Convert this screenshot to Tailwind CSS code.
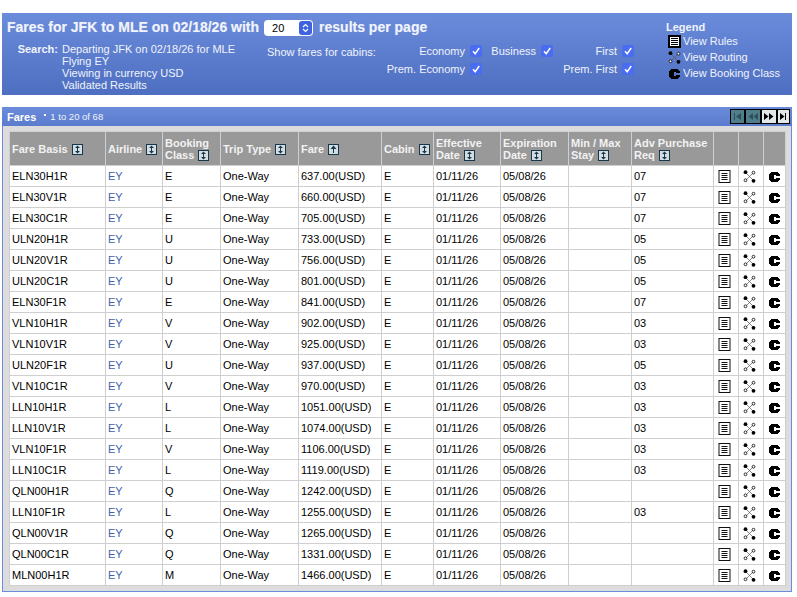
<!DOCTYPE html>
<html>
<head>
<meta charset="utf-8">
<script src="https://cdn.jsdelivr.net/npm/@tailwindcss/browser@4"></script>
</head>
<body class="bg-white font-['Liberation_Sans',Arial,sans-serif] text-[11px] leading-[12px] text-black overflow-hidden">
<svg class="hidden">
  <symbol id="legrules" viewBox="0 0 13 13"><path fill="#000" d="M0 0h13v13H0z"/><path fill="#fff" d="M2 2h9v9H2z"/><path fill="#000" d="M3 3h7v1H3zM3 5h7v1H3zM3 7h7v1H3zM3 9h7v1H3z"/></symbol>
  <symbol id="rules" viewBox="0 0 12 13"><path fill="#111" d="M0 0h12v13H0z"/><path fill="#fff" d="M1 1h10v11H1z"/><path fill="#111" d="M3 3h6v1H3zM3 5h6v1H3zM3 7h6v1H3zM3 9h6v1H3z"/></symbol>
  <symbol id="routing" viewBox="0 0 13 13"><path d="M2.500 2.500l8 8M2.500 10.500l8-8" fill="none" stroke="#555" stroke-width=".7"/><circle cx="2.500" cy="2.200" r="1.900" fill="#000"/><circle cx="10.500" cy="10.800" r="1.900" fill="#000"/><circle cx="2.500" cy="10.300" r="1.400" fill="#fff" stroke="#000" stroke-width=".8"/><circle cx="10.500" cy="2.700" r="1.400" fill="#fff" stroke="#000" stroke-width=".8"/></symbol>
  <symbol id="cls" viewBox="-1 -2 13 13"><path fill="#000" d="M2 0h7v1h1v1h1v2H7V3H5v4h2V6h4v2h-1v1H9v1H2V9H1V8H0V2h1V1h1z"/></symbol>
  <symbol id="sort" viewBox="0 0 11 11"><path fill="#17384a" d="M0 0h11v11H0z"/><path fill="#d3dde1" d="M1 1h9v9H1z"/><path fill="#17384a" d="M5.500 1.500L8 4H6v3h2L5.500 9.500 3 7h2V4H3z"/></symbol>
  <symbol id="sortup" viewBox="0 0 11 11"><path fill="#17384a" d="M0 0h11v11H0z"/><path fill="#d3dde1" d="M1 1h9v9H1z"/><path fill="#17384a" d="M5.500 1.500L8.500 5H6v4H5V5H2.500z"/></symbol>
  <symbol id="chk" viewBox="0 0 12 12"><rect width="12" height="12" rx="2.500" fill="#4a6cf0"/><path d="M3 6.300l2.200 2.400L9.200 3" fill="none" stroke="#fff" stroke-width="1.500"/></symbol>
</svg>

<section class="mt-[13px] ml-[2px] w-[790px] h-[82px] bg-gradient-to-b from-[#6b8cdb] to-[#4e6fc1] text-[#f0f3fb] relative">
  <div class="flex items-center h-[16px] translate-y-[6px] pl-[5px] text-[14px] font-bold [text-shadow:0_0_1px_#fff6]">
    <span>Fares for JFK to MLE on 02/18/26 with</span>
    <span class="ml-[5px] w-[49px] h-[16px] translate-y-[1px] bg-white rounded-[4px] flex items-center justify-between pl-[8px] pr-[1px] text-black text-[11px] font-normal [text-shadow:none]">20<svg width="13" height="14" viewBox="0 0 13 14"><rect width="13" height="14" rx="3" fill="#3f63e0"/><path d="M4 6l2.500-2.500L9 6M4 8l2.500 2.500L9 8" fill="none" stroke="#fff" stroke-width="1.200"/></svg></span>
    <span class="ml-[6px]">results per page</span>
  </div>
  <div class="flex mt-[13px]">
    <div class="w-[56px] text-right font-bold mt-[1px]">Search:</div>
    <div class="ml-[4px] w-[205px] mt-[1px]">Departing JFK on 02/18/26 for MLE<br>Flying EY<br>Viewing in currency USD<br>Validated Results</div>
    <div class="w-[120px] mt-[4px]">Show fares for cabins:</div>
    <div class="grid grid-cols-[96px_71px_81px] grid-rows-[18px_18px] items-center -ml-[1px] w-[248px]">
      <div class="flex justify-end gap-[5px] [&_svg]:shrink-0 whitespace-nowrap">Economy<svg class="w-[12px] h-[12px]"><use href="#chk"/></svg></div>
      <div class="flex justify-end gap-[5px] [&_svg]:shrink-0 whitespace-nowrap">Business<svg class="w-[12px] h-[12px]"><use href="#chk"/></svg></div>
      <div class="flex justify-end gap-[5px] [&_svg]:shrink-0 whitespace-nowrap">First<svg class="w-[12px] h-[12px]"><use href="#chk"/></svg></div>
      <div class="flex justify-end gap-[5px] [&_svg]:shrink-0 whitespace-nowrap">Prem. Economy<svg class="w-[12px] h-[12px]"><use href="#chk"/></svg></div>
      <div></div>
      <div class="flex justify-end gap-[5px] [&_svg]:shrink-0 whitespace-nowrap">Prem. First<svg class="w-[12px] h-[12px]"><use href="#chk"/></svg></div>
    </div>
  </div>
  <div class="absolute left-[664px] top-[8px]">
    <div class="font-bold">Legend</div>
    <div class="flex items-center h-[16px] pl-[2px] gap-[2px]"><svg class="w-[13px] h-[13px]"><use href="#legrules"/></svg>View Rules</div>
    <div class="flex items-center h-[16px] pl-[2px] gap-[2px]"><svg class="w-[13px] h-[13px]"><use href="#routing"/></svg>View Routing</div>
    <div class="flex items-center h-[16px] pl-[2px] gap-[2px]"><svg class="w-[13px] h-[13px]"><use href="#cls"/></svg>View Booking Class</div>
  </div>
</section>

<section class="mt-[12px] ml-[2px] w-[790px] h-[485px] bg-[#dcdcdc] border-b border-r border-l border-[#6b8cdb]">
  <div class="h-[19px] -mx-[1px] bg-gradient-to-b from-[#6b8cdb] to-[#5b7ccd] flex items-center pl-[5px] text-white relative">
    <span class="font-bold">Fares</span>
    <span class="ml-[8px] inline-block w-[2px] h-[2px] bg-white -translate-y-[2px]"></span>
    <span class="ml-[4px] text-[9.5px] text-[#f0f3fb]">1 to 20 of 68</span>
    <div class="absolute right-[2px] top-[2px] flex bg-black p-[1px] gap-[2px] h-[15px]">
      <svg class="w-[13px] h-[13px]" viewBox="0 0 13 13"><path fill="#4e7d8c" d="M0 0h13v13H0z"/><path fill="#2c4f5b" d="M3 3h1v7H3zM10 3v7L5 6.500z"/></svg>
      <svg class="w-[14px] h-[13px]" viewBox="0 0 14 13"><path fill="#4e7d8c" d="M0 0h14v13H0z"/><path fill="#2c4f5b" d="M7 3v7L2.500 6.500zM12 3v7L7.500 6.500z"/></svg>
      <svg class="w-[14px] h-[13px]" viewBox="0 0 14 13"><path fill="#e2e8ea" d="M0 0h14v13H0z"/><path fill="#000" d="M2 3v7l4.500-3.500zM7 3v7l4.500-3.500z"/></svg>
      <svg class="w-[11px] h-[13px]" viewBox="0 0 11 13"><path fill="#e2e8ea" d="M0 0h11v13H0z"/><path fill="#000" d="M2 3v7l4.500-3.500zM7 3h1v7H7z"/></svg>
    </div>
  </div>
  <div class="pt-[5px] pl-[6px]">
  <table class="table-fixed border-collapse w-[776px] text-[11px] leading-[12px] [&_td]:border [&_td]:border-[#cfcfcf] [&_td]:bg-white [&_td]:h-[21px] [&_td]:px-[2px] [&_td]:whitespace-nowrap [&_th]:border [&_th]:border-[#cfcfcf] [&_th]:bg-[#999999] [&_th]:text-[#f2f2f2] [&_th]:font-bold [&_th]:text-left [&_th]:px-[2px] [&_th]:h-[34px] [&_th]:align-middle [&_a]:text-[#3f5fa8] [&_th_svg]:inline-block [&_th_svg]:w-[11px] [&_th_svg]:h-[11px] [&_th_svg]:align-[-2px] [&_th_svg]:ml-[1px] [&_td_svg]:block [&_td_svg]:ml-[2px] [&_td_svg]:w-[13px] [&_td_svg]:h-[13px]">
    <colgroup><col class="w-[96px]"><col class="w-[57px]"><col class="w-[58px]"><col class="w-[78px]"><col class="w-[83px]"><col class="w-[52px]"><col class="w-[67px]"><col class="w-[68px]"><col class="w-[63px]"><col class="w-[82px]"><col class="w-[25px]"><col class="w-[25px]"><col class="w-[22px]"></colgroup>
    <thead><tr>
      <th>Fare Basis <svg><use href="#sort"/></svg></th>
      <th>Airline <svg><use href="#sort"/></svg></th>
      <th>Booking Class <svg><use href="#sort"/></svg></th>
      <th>Trip Type <svg><use href="#sort"/></svg></th>
      <th>Fare <svg><use href="#sortup"/></svg></th>
      <th>Cabin <svg><use href="#sort"/></svg></th>
      <th>Effective Date <svg><use href="#sort"/></svg></th>
      <th>Expiration Date <svg><use href="#sort"/></svg></th>
      <th>Min / Max Stay <svg><use href="#sort"/></svg></th>
      <th>Adv Purchase Req <svg><use href="#sort"/></svg></th>
      <th></th><th></th><th></th>
    </tr></thead>
    <tbody>
      <tr><td>ELN30H1R</td><td><a>EY</a></td><td>E</td><td>One-Way</td><td>637.00(USD)</td><td>E</td><td>01/11/26</td><td>05/08/26</td><td></td><td>07</td><td><svg><use href="#rules"/></svg></td><td><svg><use href="#routing"/></svg></td><td><svg><use href="#cls"/></svg></td></tr>
      <tr><td>ELN30V1R</td><td><a>EY</a></td><td>E</td><td>One-Way</td><td>660.00(USD)</td><td>E</td><td>01/11/26</td><td>05/08/26</td><td></td><td>07</td><td><svg><use href="#rules"/></svg></td><td><svg><use href="#routing"/></svg></td><td><svg><use href="#cls"/></svg></td></tr>
      <tr><td>ELN30C1R</td><td><a>EY</a></td><td>E</td><td>One-Way</td><td>705.00(USD)</td><td>E</td><td>01/11/26</td><td>05/08/26</td><td></td><td>07</td><td><svg><use href="#rules"/></svg></td><td><svg><use href="#routing"/></svg></td><td><svg><use href="#cls"/></svg></td></tr>
      <tr><td>ULN20H1R</td><td><a>EY</a></td><td>U</td><td>One-Way</td><td>733.00(USD)</td><td>E</td><td>01/11/26</td><td>05/08/26</td><td></td><td>05</td><td><svg><use href="#rules"/></svg></td><td><svg><use href="#routing"/></svg></td><td><svg><use href="#cls"/></svg></td></tr>
      <tr><td>ULN20V1R</td><td><a>EY</a></td><td>U</td><td>One-Way</td><td>756.00(USD)</td><td>E</td><td>01/11/26</td><td>05/08/26</td><td></td><td>05</td><td><svg><use href="#rules"/></svg></td><td><svg><use href="#routing"/></svg></td><td><svg><use href="#cls"/></svg></td></tr>
      <tr><td>ULN20C1R</td><td><a>EY</a></td><td>U</td><td>One-Way</td><td>801.00(USD)</td><td>E</td><td>01/11/26</td><td>05/08/26</td><td></td><td>05</td><td><svg><use href="#rules"/></svg></td><td><svg><use href="#routing"/></svg></td><td><svg><use href="#cls"/></svg></td></tr>
      <tr><td>ELN30F1R</td><td><a>EY</a></td><td>E</td><td>One-Way</td><td>841.00(USD)</td><td>E</td><td>01/11/26</td><td>05/08/26</td><td></td><td>07</td><td><svg><use href="#rules"/></svg></td><td><svg><use href="#routing"/></svg></td><td><svg><use href="#cls"/></svg></td></tr>
      <tr><td>VLN10H1R</td><td><a>EY</a></td><td>V</td><td>One-Way</td><td>902.00(USD)</td><td>E</td><td>01/11/26</td><td>05/08/26</td><td></td><td>03</td><td><svg><use href="#rules"/></svg></td><td><svg><use href="#routing"/></svg></td><td><svg><use href="#cls"/></svg></td></tr>
      <tr><td>VLN10V1R</td><td><a>EY</a></td><td>V</td><td>One-Way</td><td>925.00(USD)</td><td>E</td><td>01/11/26</td><td>05/08/26</td><td></td><td>03</td><td><svg><use href="#rules"/></svg></td><td><svg><use href="#routing"/></svg></td><td><svg><use href="#cls"/></svg></td></tr>
      <tr><td>ULN20F1R</td><td><a>EY</a></td><td>U</td><td>One-Way</td><td>937.00(USD)</td><td>E</td><td>01/11/26</td><td>05/08/26</td><td></td><td>05</td><td><svg><use href="#rules"/></svg></td><td><svg><use href="#routing"/></svg></td><td><svg><use href="#cls"/></svg></td></tr>
      <tr><td>VLN10C1R</td><td><a>EY</a></td><td>V</td><td>One-Way</td><td>970.00(USD)</td><td>E</td><td>01/11/26</td><td>05/08/26</td><td></td><td>03</td><td><svg><use href="#rules"/></svg></td><td><svg><use href="#routing"/></svg></td><td><svg><use href="#cls"/></svg></td></tr>
      <tr><td>LLN10H1R</td><td><a>EY</a></td><td>L</td><td>One-Way</td><td>1051.00(USD)</td><td>E</td><td>01/11/26</td><td>05/08/26</td><td></td><td>03</td><td><svg><use href="#rules"/></svg></td><td><svg><use href="#routing"/></svg></td><td><svg><use href="#cls"/></svg></td></tr>
      <tr><td>LLN10V1R</td><td><a>EY</a></td><td>L</td><td>One-Way</td><td>1074.00(USD)</td><td>E</td><td>01/11/26</td><td>05/08/26</td><td></td><td>03</td><td><svg><use href="#rules"/></svg></td><td><svg><use href="#routing"/></svg></td><td><svg><use href="#cls"/></svg></td></tr>
      <tr><td>VLN10F1R</td><td><a>EY</a></td><td>V</td><td>One-Way</td><td>1106.00(USD)</td><td>E</td><td>01/11/26</td><td>05/08/26</td><td></td><td>03</td><td><svg><use href="#rules"/></svg></td><td><svg><use href="#routing"/></svg></td><td><svg><use href="#cls"/></svg></td></tr>
      <tr><td>LLN10C1R</td><td><a>EY</a></td><td>L</td><td>One-Way</td><td>1119.00(USD)</td><td>E</td><td>01/11/26</td><td>05/08/26</td><td></td><td>03</td><td><svg><use href="#rules"/></svg></td><td><svg><use href="#routing"/></svg></td><td><svg><use href="#cls"/></svg></td></tr>
      <tr><td>QLN00H1R</td><td><a>EY</a></td><td>Q</td><td>One-Way</td><td>1242.00(USD)</td><td>E</td><td>01/11/26</td><td>05/08/26</td><td></td><td></td><td><svg><use href="#rules"/></svg></td><td><svg><use href="#routing"/></svg></td><td><svg><use href="#cls"/></svg></td></tr>
      <tr><td>LLN10F1R</td><td><a>EY</a></td><td>L</td><td>One-Way</td><td>1255.00(USD)</td><td>E</td><td>01/11/26</td><td>05/08/26</td><td></td><td>03</td><td><svg><use href="#rules"/></svg></td><td><svg><use href="#routing"/></svg></td><td><svg><use href="#cls"/></svg></td></tr>
      <tr><td>QLN00V1R</td><td><a>EY</a></td><td>Q</td><td>One-Way</td><td>1265.00(USD)</td><td>E</td><td>01/11/26</td><td>05/08/26</td><td></td><td></td><td><svg><use href="#rules"/></svg></td><td><svg><use href="#routing"/></svg></td><td><svg><use href="#cls"/></svg></td></tr>
      <tr><td>QLN00C1R</td><td><a>EY</a></td><td>Q</td><td>One-Way</td><td>1331.00(USD)</td><td>E</td><td>01/11/26</td><td>05/08/26</td><td></td><td></td><td><svg><use href="#rules"/></svg></td><td><svg><use href="#routing"/></svg></td><td><svg><use href="#cls"/></svg></td></tr>
      <tr><td>MLN00H1R</td><td><a>EY</a></td><td>M</td><td>One-Way</td><td>1466.00(USD)</td><td>E</td><td>01/11/26</td><td>05/08/26</td><td></td><td></td><td><svg><use href="#rules"/></svg></td><td><svg><use href="#routing"/></svg></td><td><svg><use href="#cls"/></svg></td></tr>
    </tbody>
  </table>
  </div>
</section>
</body>
</html>
